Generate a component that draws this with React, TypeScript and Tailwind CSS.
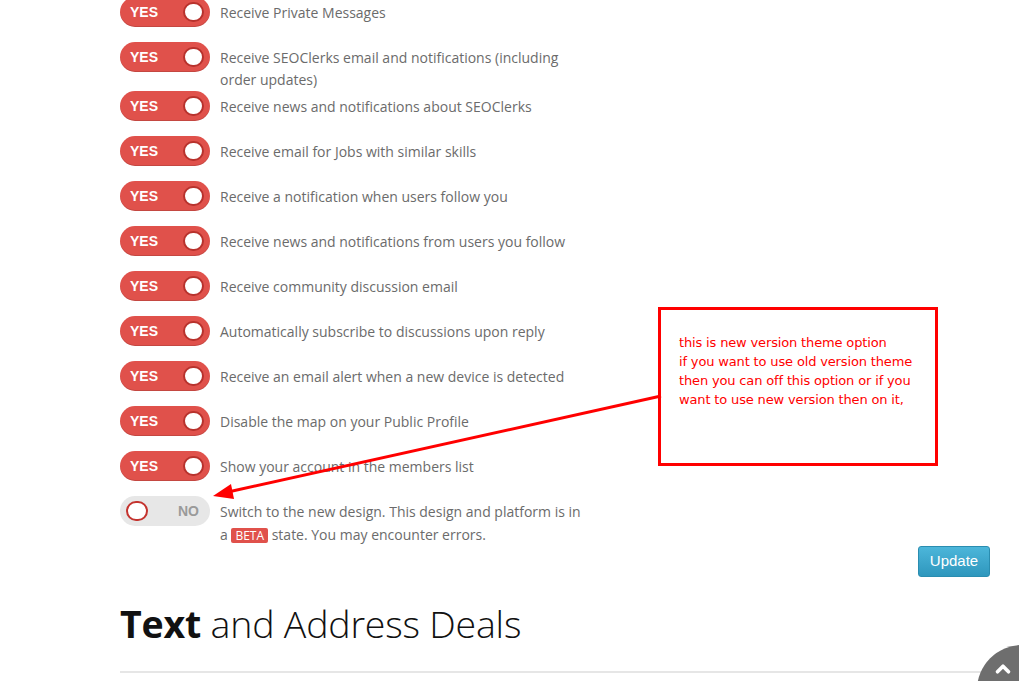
import { ChevronUp } from "lucide-react";

const rows = [
  "Receive Private Messages",
  "Receive SEOClerks email and notifications (including order updates)",
  "Receive news and notifications about SEOClerks",
  "Receive email for Jobs with similar skills",
  "Receive a notification when users follow you",
  "Receive news and notifications from users you follow",
  "Receive community discussion email",
  "Automatically subscribe to discussions upon reply",
  "Receive an email alert when a new device is detected",
  "Disable the map on your Public Profile",
  "Show your account in the members list",
];

const Toggle = ({ on }: { on: boolean }) => {
  if (on) {
    return (
      <div className="flex items-center justify-between w-[90px] h-[30px] shrink-0 pl-[10px] pr-[6px] rounded-full bg-[#e0514b] shadow-[inset_0_-1px_0_rgba(0,0,0,0.12)]">
        <span className="text-[14px] leading-[20px] font-bold text-white font-['Liberation_Sans',sans-serif]">
          YES
        </span>
        <span className="w-[21px] h-[20px] rounded-full bg-white border-2 border-[#b8322d]" />
      </div>
    );
  }
  return (
    <div className="flex items-center justify-between w-[90px] h-[30px] shrink-0 pl-[6px] pr-[11px] rounded-full bg-[#e7e7e7]">
      <span className="w-[22px] h-[20px] rounded-full bg-white border-2 border-[#c4332e]" />
      <span className="text-[14px] leading-[20px] font-bold text-[#9a9a9a] font-['Liberation_Sans',sans-serif]">
        NO
      </span>
    </div>
  );
};

export default function App() {
  return (
    <div className="relative w-[1019px] h-[681px] overflow-hidden bg-white font-['Open_Sans',sans-serif]">
      <div className="pl-[120px] mt-[-3px] flex flex-col">
        {rows.map((label) => (
          <div key={label} className="flex items-start gap-[10px]">
            <div className="pb-[15px]">
              <Toggle on />
            </div>
            <p className="w-[370px] pt-[5px] text-[14px] leading-[22px] text-[#6b6b6b]">{label}</p>
          </div>
        ))}
        <div className="flex items-start gap-[10px]">
          <Toggle on={false} />
          <p className="w-[370px] pt-[4px] text-[14px] leading-[23px] text-[#6b6b6b]">
            Switch to the new design. This design and platform is in a{" "}
            <span className="inline-block px-[4px] rounded-[2px] bg-[#e0514b] text-white text-[12px] leading-[15px]">
              BETA
            </span>{" "}
            state. You may encounter errors.
          </p>
        </div>
      </div>

      <div className="flex justify-end pr-[29px]">
        <button className="w-[72px] h-[31px] rounded-[3px] border border-[#2a8db0] bg-gradient-to-b from-[#4cb6da] to-[#2e97bd] text-white text-[15px] font-['Liberation_Sans',sans-serif]">
          Update
        </button>
      </div>

      <h2 className="pl-[120px] mt-[22px] text-[37.5px] leading-[50px] text-[#111] tracking-[-0.2px]">
        <span className="font-bold">Text</span> <span className="font-light">and Address Deals</span>
      </h2>

      <div className="ml-[120px] mt-[22px] h-[2px] bg-[#e6e6e6]" />

      {/* scroll to top */}
      <div className="absolute left-[977px] top-[645px] w-[90px] h-[90px] rounded-full bg-[#6e6e6e]">
        <ChevronUp className="absolute left-[15px] top-[13px] text-white" size={22} strokeWidth={4} />
      </div>

      {/* annotation */}
      <div className="absolute left-[658px] top-[307px] w-[280px] h-[159px] border-[3px] border-[#ff0000] bg-white">
        <p className="pl-[18px] pt-[23px] text-[13px] leading-[19px] text-[#ff0000] font-['DejaVu_Sans',sans-serif] tracking-[-0.15px]">
          this is new version theme option
          <br />
          if you want to use old version theme
          <br />
          then you can off this option or if you
          <br />
          want to use new version then on it,
        </p>
      </div>
      <svg className="absolute left-0 top-0" width="1019" height="681">
        <line x1="661" y1="396" x2="228" y2="492" stroke="#ff0000" strokeWidth="3" />
        <polygon points="213,496 231,484 234,499" fill="#ff0000" />
      </svg>
    </div>
  );
}
